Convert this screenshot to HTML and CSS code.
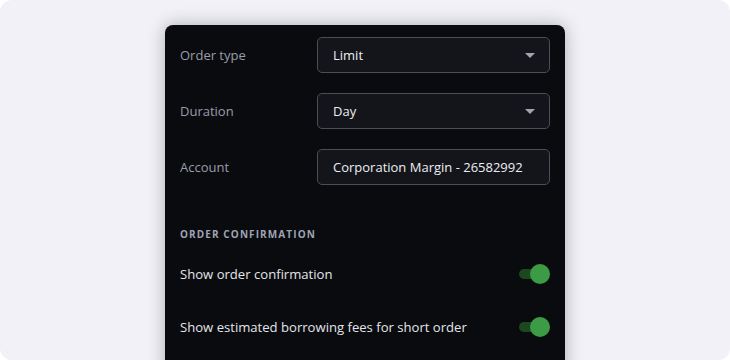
FILE: index.html
```html
<!DOCTYPE html>
<html>
<head>
<meta charset="utf-8">
<link rel="stylesheet" href="styles.css">
</head>
<body>
<div class="frame">
  <div class="panel">
    <div class="field">
      <div class="label">Order type</div>
      <div class="select">
        <span>Limit</span>
        <span class="caret"></span>
      </div>
    </div>
    <div class="field">
      <div class="label">Duration</div>
      <div class="select">
        <span>Day</span>
        <span class="caret"></span>
      </div>
    </div>
    <div class="field">
      <div class="label">Account</div>
      <div class="select">
        <span>Corporation Margin - 26582992</span>
      </div>
    </div>
    <div class="section">ORDER CONFIRMATION</div>
    <div class="toggle-row">
      <span>Show order confirmation</span>
      <span class="toggle"><span class="track"></span><span class="knob"></span></span>
    </div>
    <div class="toggle-row">
      <span>Show estimated borrowing fees for short order</span>
      <span class="toggle"><span class="track"></span><span class="knob"></span></span>
    </div>
  </div>
</div>
</body>
</html>
```
FILE: styles.css
```css
html, body {
  margin: 0;
  padding: 0;
  background: #ffffff;
}
body {
  font-family: "Open Sans", "Noto Sans", sans-serif;
}
.frame {
  width: 730px;
  height: 360px;
  background: #f1f1f7;
  border-radius: 12px;
  overflow: hidden;
  padding-top: 25px;
  box-sizing: border-box;
}
.panel {
  width: 400px;
  height: 400px;
  margin: 0 auto;
  background: #0a0b0e;
  border-radius: 8px;
  box-shadow: 0 0 18px rgba(0, 0, 0, 0.28);
  padding: 12px 15px 0 15px;
  box-sizing: border-box;
  display: flex;
  flex-direction: column;
}
.field {
  display: flex;
  align-items: center;
  height: 36px;
  margin-bottom: 20px;
}
.field:nth-child(3) {
  margin-bottom: 0;
}
.label {
  width: 137px;
  color: #9a9cab;
  font-size: 13px;
}
.select {
  flex: 1;
  height: 36px;
  box-sizing: border-box;
  border: 1px solid #4b4e57;
  border-radius: 5px;
  background: #14151a;
  display: flex;
  align-items: center;
  justify-content: space-between;
  padding: 0 14px 0 15px;
  color: #eceef2;
  font-size: 13px;
}
.caret {
  width: 0;
  height: 0;
  border-left: 5px solid transparent;
  border-right: 5px solid transparent;
  border-top: 5px solid #a0a3b0;
}
.section {
  margin-top: 41px;
  height: 16px;
  line-height: 16px;
  font-size: 10px;
  font-weight: 700;
  letter-spacing: 1.1px;
  color: #9ea3b5;
  margin-bottom: 5px;
}
.toggle-row {
  height: 53px;
  display: flex;
  align-items: center;
  justify-content: space-between;
  color: #e4e5ea;
  font-size: 13.1px;
}
.toggle {
  position: relative;
  width: 31px;
  height: 20px;
  display: flex;
  align-items: center;
}
.track {
  width: 25px;
  height: 10px;
  border-radius: 5px;
  background: #1c4820;
}
.knob {
  position: absolute;
  right: 0;
  top: 0;
  width: 20px;
  height: 20px;
  border-radius: 50%;
  background: #3c9b45;
}
```
